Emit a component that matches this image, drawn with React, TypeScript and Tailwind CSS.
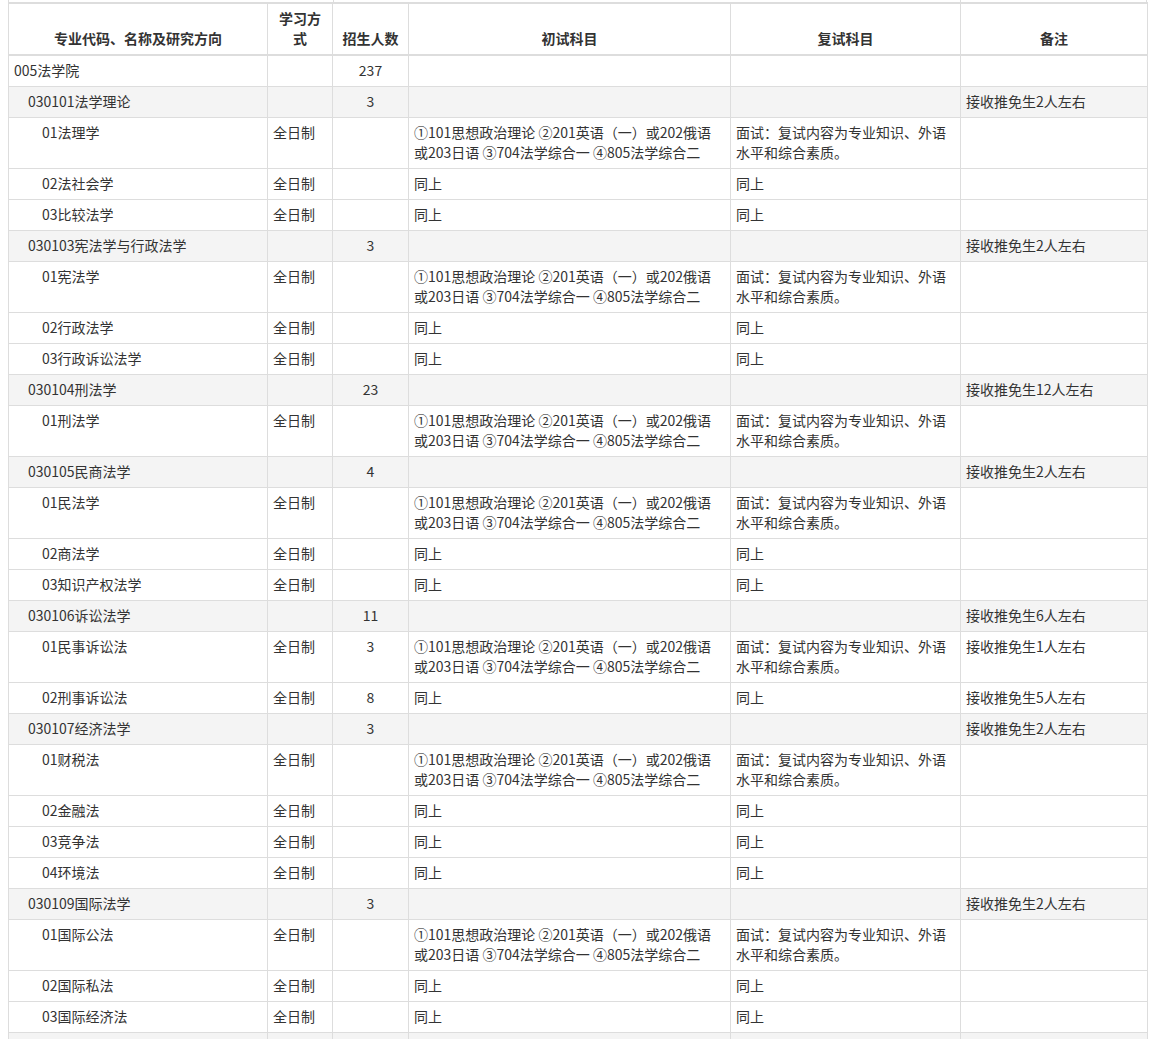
import React from "react";

type Row = {
  name: string;
  level: 0 | 1 | 2;
  mode?: string;
  num?: string;
  first?: React.ReactNode;
  second?: React.ReactNode;
  note?: string;
};

const LONG1 = (
  <>
    ①101思想政治理论 ②201英语（一）或202俄语
    <br />
    或203日语 ③704法学综合一 ④805法学综合二
  </>
);
const LONG2 = (
  <>
    面试：复试内容为专业知识、外语
    <br />
    水平和综合素质。
  </>
);

const major = (name: string, num: string, note: string): Row => ({ name, level: 1, num, note });
const longRow = (name: string, num?: string, note?: string): Row => ({
  name,
  level: 2,
  mode: "全日制",
  num,
  first: LONG1,
  second: LONG2,
  note,
});
const same = (name: string, num?: string, note?: string): Row => ({
  name,
  level: 2,
  mode: "全日制",
  num,
  first: "同上",
  second: "同上",
  note,
});

const rows: Row[] = [
  { name: "005法学院", level: 0, num: "237" },
  major("030101法学理论", "3", "接收推免生2人左右"),
  longRow("01法理学"),
  same("02法社会学"),
  same("03比较法学"),
  major("030103宪法学与行政法学", "3", "接收推免生2人左右"),
  longRow("01宪法学"),
  same("02行政法学"),
  same("03行政诉讼法学"),
  major("030104刑法学", "23", "接收推免生12人左右"),
  longRow("01刑法学"),
  major("030105民商法学", "4", "接收推免生2人左右"),
  longRow("01民法学"),
  same("02商法学"),
  same("03知识产权法学"),
  major("030106诉讼法学", "11", "接收推免生6人左右"),
  longRow("01民事诉讼法", "3", "接收推免生1人左右"),
  same("02刑事诉讼法", "8", "接收推免生5人左右"),
  major("030107经济法学", "3", "接收推免生2人左右"),
  longRow("01财税法"),
  same("02金融法"),
  same("03竞争法"),
  same("04环境法"),
  major("030109国际法学", "3", "接收推免生2人左右"),
  longRow("01国际公法"),
  same("02国际私法"),
  same("03国际经济法"),
  { name: "", level: 1 },
];

const td = "border border-[#dddddd] px-[5px] pt-[4px] pb-[6px] align-top leading-5 whitespace-nowrap";
const th = "border border-[#dddddd] border-b-2 border-t-2 px-[5px] pt-[4px] pb-[6px] align-bottom leading-5 font-bold text-center";

export default function App() {
  return (
    <div
      className="bg-white text-[14px] text-[#333333] pl-2"
      style={{ fontFamily: '"Microsoft YaHei", "Noto Sans CJK SC", "Noto Sans", sans-serif' }}
    >
      <div className="flex h-[2px] w-[1140px]">
        <div className="w-[325px] border-l border-[#dddddd]" />
        <div className="w-[627px] border-l border-[#dddddd]" />
        <div className="w-[187px] border-l border-r border-[#dddddd]" />
      </div>
      <table className="table-fixed border-collapse w-[1140px]">
        <colgroup>
          <col className="w-[259px]" />
          <col className="w-[65px]" />
          <col className="w-[76px]" />
          <col className="w-[322px]" />
          <col className="w-[230px]" />
          <col />
        </colgroup>
        <thead>
          <tr>
            <th className={th}>专业代码、名称及研究方向</th>
            <th className={th}>
              学习方
              <br />式
            </th>
            <th className={th}>招生人数</th>
            <th className={th}>初试科目</th>
            <th className={th}>复试科目</th>
            <th className={th}>备注</th>
          </tr>
        </thead>
        <tbody>
          {rows.map((r, i) => (
            <tr key={i} className={r.level === 1 ? "bg-[#f4f4f4]" : "bg-white"}>
              <td className={td}>
                <span className={r.level === 0 ? "" : r.level === 1 ? "pl-[14px]" : "pl-[28px]"}>{r.name}</span>
              </td>
              <td className={td}>{r.mode}</td>
              <td className={td + " text-center"}>{r.num}</td>
              <td className={td}>{r.first}</td>
              <td className={td}>{r.second}</td>
              <td className={td}>{r.note}</td>
            </tr>
          ))}
        </tbody>
      </table>
    </div>
  );
}
